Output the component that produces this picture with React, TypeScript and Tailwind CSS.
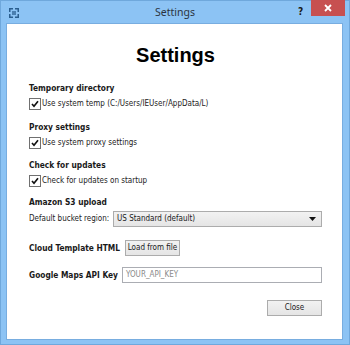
import React from "react";

const Check = () => (
  <span className="w-[12px] h-[12px] border border-[#707070] bg-white flex items-center justify-center shrink-0">
    <svg width="8" height="8" viewBox="0 0 8 8">
      <path d="M1 4 L3 6.2 L7 1.3" stroke="#111" strokeWidth="1.7" fill="none" />
    </svg>
  </span>
);

const Title = ({ children, className = "" }: { children: React.ReactNode; className?: string }) => (
  <div className={"h-[15px] flex items-center font-bold text-[8.3px] text-[#1a1a1a] whitespace-nowrap " + className}>{children}</div>
);

const CheckRow = ({ label }: { label: string }) => (
  <div className="h-[16px] flex items-center gap-[1px]">
    <Check />
    <span className="text-[#222] whitespace-nowrap">{label}</span>
  </div>
);

export default function App() {
  return (
    <div
      className="w-[350px] h-[345px] bg-[#8cc3f4] border border-[#6fa8dc] flex flex-col"
      style={{ fontFamily: '"DejaVu Sans Condensed", "DejaVu Sans", sans-serif' }}
    >
      <div className="h-[22px] flex items-start relative">
        <svg className="absolute left-[7px] top-[6px]" width="12" height="12" viewBox="0 0 12 12">
          <path d="M1 1h4v1.5H2.5V5H1z" fill="#2b5f8f" />
          <path d="M11 1H7v1.5h2.5V5H11z" fill="#2b5f8f" />
          <path d="M1 11h4V9.5H2.5V7H1z" fill="#2b5f8f" />
          <path d="M11 11H7V9.5h2.5V7H11z" fill="#2b5f8f" />
          <rect x="4" y="4" width="4" height="4" fill="#4a7fb0" />
        </svg>
        <div
          className="flex-1 text-center text-[10.5px] text-[#2b3440] pt-[4px]"
          style={{ fontFamily: '"Noto Sans", "Open Sans", sans-serif' }}
        >
          Settings
        </div>
        <div className="absolute left-[297px] top-[3px] text-[10px] font-bold text-[#1a1a1a]">?</div>
        <div className="absolute left-[310px] top-[-1px] w-[34px] h-[16px] bg-[#c75050] flex items-center justify-center">
          <svg width="8" height="8" viewBox="0 0 8 8">
            <path d="M1 1L7 7M7 1L1 7" stroke="white" strokeWidth="1.8" />
          </svg>
        </div>
      </div>
      <div className="ml-[5px] mr-[6px] h-[317px] bg-white border border-[#78ade0] flex flex-col pl-[22px] pr-[20px] text-[8px] text-[#1a1a1a]">
        <div
          className="mt-[19px] h-[24px] flex items-center justify-center text-[20px] font-bold text-black"
          style={{ fontFamily: '"Liberation Sans", Arial, sans-serif' }}
        >
          Settings
        </div>
        <Title className="mt-[14px]">Temporary directory</Title>
        <CheckRow label="Use system temp (C:/Users/IEUser/AppData/L)" />
        <Title className="mt-[8px]">Proxy settings</Title>
        <CheckRow label="Use system proxy settings" />
        <Title className="mt-[7px]">Check for updates</Title>
        <CheckRow label="Check for updates on startup" />
        <Title className="mt-[6px]">Amazon S3 upload</Title>
        <div className="mt-[1px] flex items-center h-[16px]">
          <span className="w-[84px] text-[#222] whitespace-nowrap">Default bucket region:</span>
          <div className="flex-1 h-[16px] border border-[#acacac] bg-gradient-to-b from-[#f2f2f2] to-[#e5e5e5] flex items-center pl-[3px] pr-[5px]">
            <span className="flex-1 whitespace-nowrap">US Standard (default)</span>
            <svg width="7" height="4" viewBox="0 0 7 4">
              <path d="M0 0h7L3.5 4z" fill="#111" />
            </svg>
          </div>
        </div>
        <div className="mt-[13px] flex items-center h-[16px]">
          <span className="w-[96px] font-bold text-[8.3px] whitespace-nowrap">Cloud Template HTML</span>
          <div className="w-[55px] h-[16px] border border-[#acacac] bg-gradient-to-b from-[#f2f2f2] to-[#e5e5e5] flex items-center justify-center whitespace-nowrap">
            Load from file
          </div>
        </div>
        <div className="mt-[11px] flex items-center h-[16px]">
          <span className="w-[93px] font-bold text-[8.3px] whitespace-nowrap">Google Maps API Key</span>
          <div className="flex-1 h-[16px] border border-[#abadb3] bg-white flex items-center pl-[3px] text-[#8a8a8a]">
            YOUR_API_KEY
          </div>
        </div>
        <div className="mt-[17px] flex justify-end">
          <div className="w-[55px] h-[16px] border border-[#acacac] bg-gradient-to-b from-[#f2f2f2] to-[#e5e5e5] flex items-center justify-center">
            Close
          </div>
        </div>
      </div>
    </div>
  );
}
